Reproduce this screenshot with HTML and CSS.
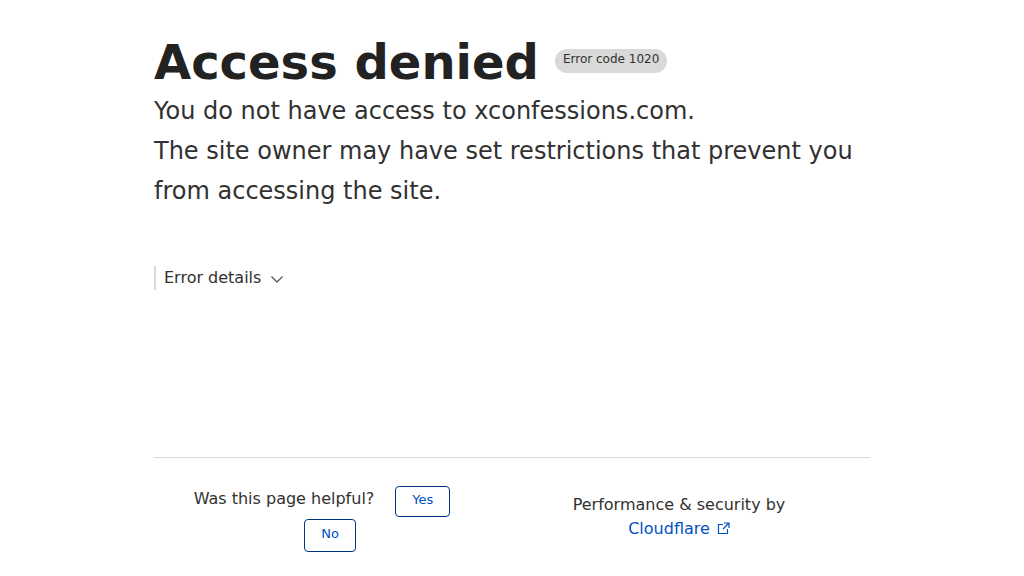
FILE: index.html
```html
<!DOCTYPE html>
<html lang="en">
<head>
<meta charset="utf-8">
<title>Access denied</title>
<link rel="stylesheet" href="styles.css">
</head>
<body>
<div class="page">
  <header class="intro">
    <h1 class="title"><span class="title-text">Access denied</span><span class="code-label">Error code 1020</span></h1>
    <p class="lead">You do not have access to xconfessions.com.<br>The site owner may have set restrictions that prevent you from accessing the site.</p>
  </header>

  <div class="details">
    <span>Error details</span>
    <svg class="chevron" width="16" height="16" viewBox="0 0 16 16" aria-hidden="true"><path d="M2.5 5.5 L8 11 L13.5 5.5" fill="none" stroke="#595959" stroke-width="1.3"/></svg>
  </div>

  <footer class="footer">
    <div class="feedback">
      <span class="feedback-q">Was this page helpful?</span>
      <button class="fb-btn fb-yes">Yes</button>
      <button class="fb-btn fb-no">No</button>
    </div>
    <div class="perf">
      <div>Performance &amp; security by</div>
      <a class="cf-link" href="#">Cloudflare<svg class="ext" width="13" height="13" viewBox="0 0 13 13" aria-hidden="true"><path d="M6 2.5 H1.5 V11.5 H10.5 V7" fill="none" stroke="#0051c3" stroke-width="1.2"/><path d="M7 1 H12 V6 M12 1 L6 7" fill="none" stroke="#0051c3" stroke-width="1.2"/></svg></a>
    </div>
  </footer>
</div>
</body>
</html>
```

FILE: styles.css
```css
html, body {
  margin: 0;
  padding: 0;
  background: #ffffff;
}

body {
  font-family: "DejaVu Sans", sans-serif;
  color: #313131;
}

.page {
  width: 716px;
  margin: 0 auto;
  padding-top: 34px;
}

.title {
  display: flex;
  align-items: flex-start;
  margin: 0;
  font-size: 48px;
  line-height: 57px;
  font-weight: bold;
  color: #222222;
}

.code-label {
  margin-left: 16px;
  margin-top: 15px;
  padding: 2px 8px 6px;
  background: #d9d9d9;
  border-radius: 12px;
  font-size: 12px;
  line-height: 16px;
  font-weight: normal;
  color: #313131;
}

.lead {
  margin: 0;
  font-size: 24px;
  line-height: 40px;
  color: #313131;
}

.details {
  display: flex;
  align-items: center;
  gap: 8px;
  margin-top: 55px;
  padding-left: 8px;
  border-left: 2px solid #d9d9d9;
  font-size: 16px;
  line-height: 24px;
}

.chevron {
  display: block;
  margin-top: 1px;
}

.footer {
  display: grid;
  grid-template-columns: 352px 346px;
  margin-top: 167px;
  padding-top: 28px;
  border-top: 1px solid #d9d9d9;
  font-size: 16px;
  line-height: 24px;
}

.feedback {
  display: flex;
  flex-wrap: wrap;
  justify-content: center;
  align-items: baseline;
  row-gap: 2px;
}

.fb-btn {
  box-sizing: border-box;
  height: 31px;
  padding: 4px 16px 8px;
  margin: 0 16px;
  font-family: "DejaVu Sans", sans-serif;
  font-size: 13px;
  line-height: 17px;
  color: #0051c3;
  background: #ffffff;
  border: 1px solid #003681;
  border-radius: 4px;
}

.fb-yes {
  margin-left: 21px;
}

.fb-no {
  height: 33px;
}

.perf {
  margin-top: 7px;
  text-align: center;
  color: #313131;
}

.cf-link {
  color: #0051c3;
  text-decoration: none;
}

.ext {
  margin-left: 7px;
  vertical-align: -1px;
}
```
